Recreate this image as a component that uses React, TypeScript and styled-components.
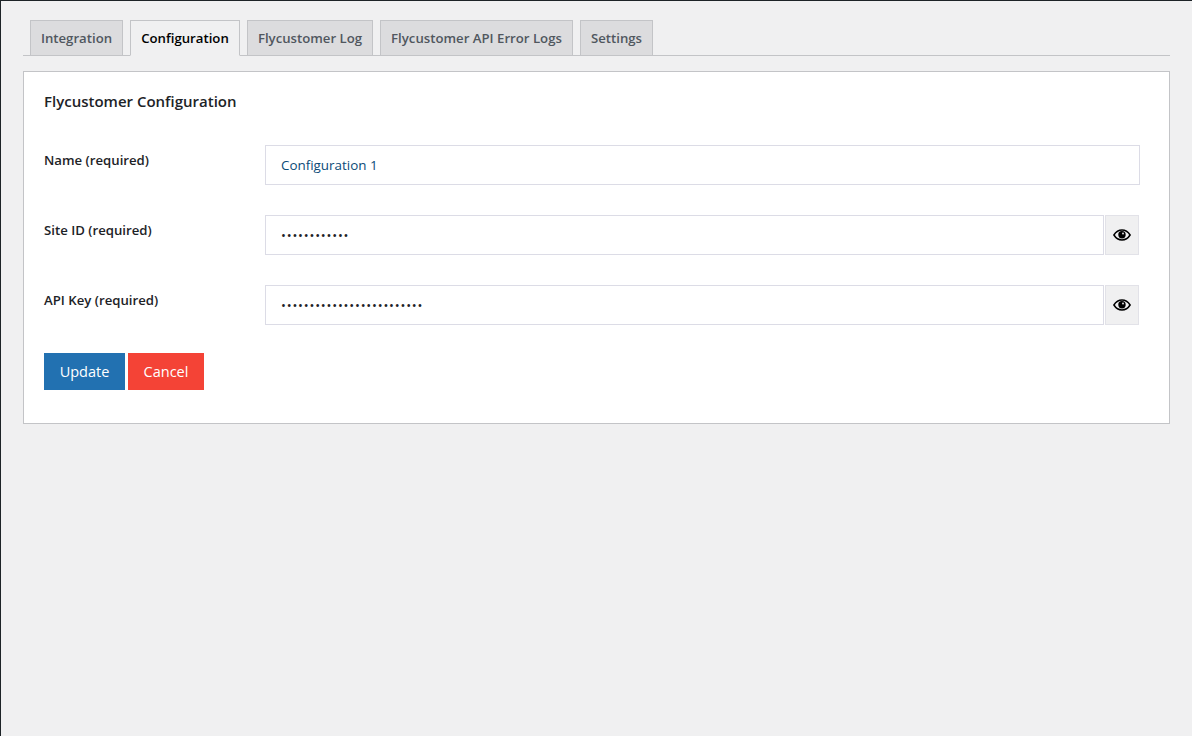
import React from 'react';
import styled, { createGlobalStyle } from 'styled-components';

const GlobalStyle = createGlobalStyle`
  html, body {
    margin: 0;
    padding: 0;
    background: #f0f0f1;
  }
  body {
    font-family: "Open Sans", "Noto Sans", sans-serif;
    color: #1d2327;
  }
`;

const Page = styled.div`
  box-sizing: border-box;
  height: 736px;
  padding: 19px 22px 0 22px;
  border-top: 1px solid #1d2327;
  border-left: 1px solid #1d2327;
  overflow: hidden;
`;
const TabBar = styled.nav`
  display: flex;
  gap: 7px;
  height: 36px;
  padding-left: 7px;
  border-bottom: 1px solid #c3c4c7;
  box-sizing: border-box;
`;
const Tab = styled.a<{ $active?: boolean; $w: number }>`
  box-sizing: border-box;
  display: flex;
  align-items: center;
  justify-content: center;
  width: ${(p) => p.$w}px;
  height: ${(p) => (p.$active ? 36 : 35)}px;
  border: 1px solid #c3c4c7;
  border-bottom: ${(p) => (p.$active ? '1px solid #f0f0f1' : 'none')};
  background: ${(p) => (p.$active ? '#f0f0f1' : '#dcdcde')};
  color: ${(p) => (p.$active ? '#000' : '#50575e')};
  font-size: 13.2px;
  font-weight: 600;
  white-space: nowrap;
`;
const Card = styled.section`
  box-sizing: border-box;
  height: 353px;
  margin-top: 15px;
  padding: 19px 29px 0 20px;
  background: #fff;
  border: 1px solid #c3c4c7;
`;
const Heading = styled.h2`
  margin: 0 0 34px;
  height: 20px;
  font-size: 15px;
  line-height: 20px;
  font-weight: 600;
  color: #1d2327;
`;
const Row = styled.div`
  display: flex;
  height: 40px;
  margin-bottom: 30px;
`;
const Label = styled.label`
  width: 221px;
  flex: none;
  padding-top: 6px;
  font-size: 13.2px;
  line-height: 18px;
  font-weight: 600;
  color: #1d2327;
`;
const TextInput = styled.input`
  box-sizing: border-box;
  flex: 1;
  min-width: 0;
  height: 40px;
  margin: 0;
  padding: 0 15px;
  border: 1px solid #dcdce6;
  border-radius: 0;
  outline: none;
  background: #fff;
  color: #0a4b78;
  font-family: inherit;
  font-size: 13.4px;
`;
const SecretInput = styled(TextInput)`
  color: #1d2327;
  font-size: 13px;
  letter-spacing: 0.8px;
`;
const EyeButton = styled.button`
  box-sizing: border-box;
  flex: none;
  width: 34px;
  height: 40px;
  margin: 0 1px;
  padding: 0;
  display: flex;
  align-items: center;
  justify-content: center;
  border: 1px solid #e2e2e8;
  background: #f0f0f1;
  color: #000;
`;
const Actions = styled.div`
  display: flex;
  gap: 3px;
  margin-top: -2px;
`;
const ActionButton = styled.button<{ $danger?: boolean }>`
  box-sizing: border-box;
  width: ${(p) => (p.$danger ? 76 : 81)}px;
  height: 37px;
  padding: 0;
  border: none;
  border-radius: 0;
  background: ${(p) => (p.$danger ? '#f44336' : '#2271b1')};
  color: #fff;
  font-family: inherit;
  font-size: 14.5px;
`;

const EyeIcon = () => (
  <svg width="18" height="12" viewBox="0 0 18 12" aria-hidden="true">
    <path
      d="M0.9 6C2.9 2.8 5.8 1 9 1s6.1 1.8 8.1 5c-2 3.200-4.900 5-8.100 5S2.900 9.200 0.900 6Z"
      fill="none"
      stroke="currentColor"
      strokeWidth="1.5"
    />
    <circle cx="9" cy="5.800" r="3.700" fill="currentColor" />
    <circle cx="10" cy="4.500" r="0.900" fill="#f0f0f1" />
  </svg>
);

const tabs = [
  { label: 'Integration', width: 93 },
  { label: 'Configuration', width: 110, active: true },
  { label: 'Flycustomer Log', width: 126 },
  { label: 'Flycustomer API Error Logs', width: 193 },
  { label: 'Settings', width: 73 },
];

export default function App() {
  return (
    <>
      <GlobalStyle />
      <Page>
        <TabBar>
          {tabs.map((t) => (
            <Tab key={t.label} $active={t.active} $w={t.width}>
              {t.label}
            </Tab>
          ))}
        </TabBar>
        <Card>
          <Heading>Flycustomer Configuration</Heading>
          <Row>
            <Label>Name (required)</Label>
            <TextInput defaultValue="Configuration 1" />
          </Row>
          <Row>
            <Label>Site ID (required)</Label>
            <SecretInput type="password" defaultValue="123456789012" />
            <EyeButton>
              <EyeIcon />
            </EyeButton>
          </Row>
          <Row>
            <Label>API Key (required)</Label>
            <SecretInput type="password" defaultValue="1234567890123456789012345" />
            <EyeButton>
              <EyeIcon />
            </EyeButton>
          </Row>
          <Actions>
            <ActionButton>Update</ActionButton>
            <ActionButton $danger>Cancel</ActionButton>
          </Actions>
        </Card>
      </Page>
    </>
  );
}
